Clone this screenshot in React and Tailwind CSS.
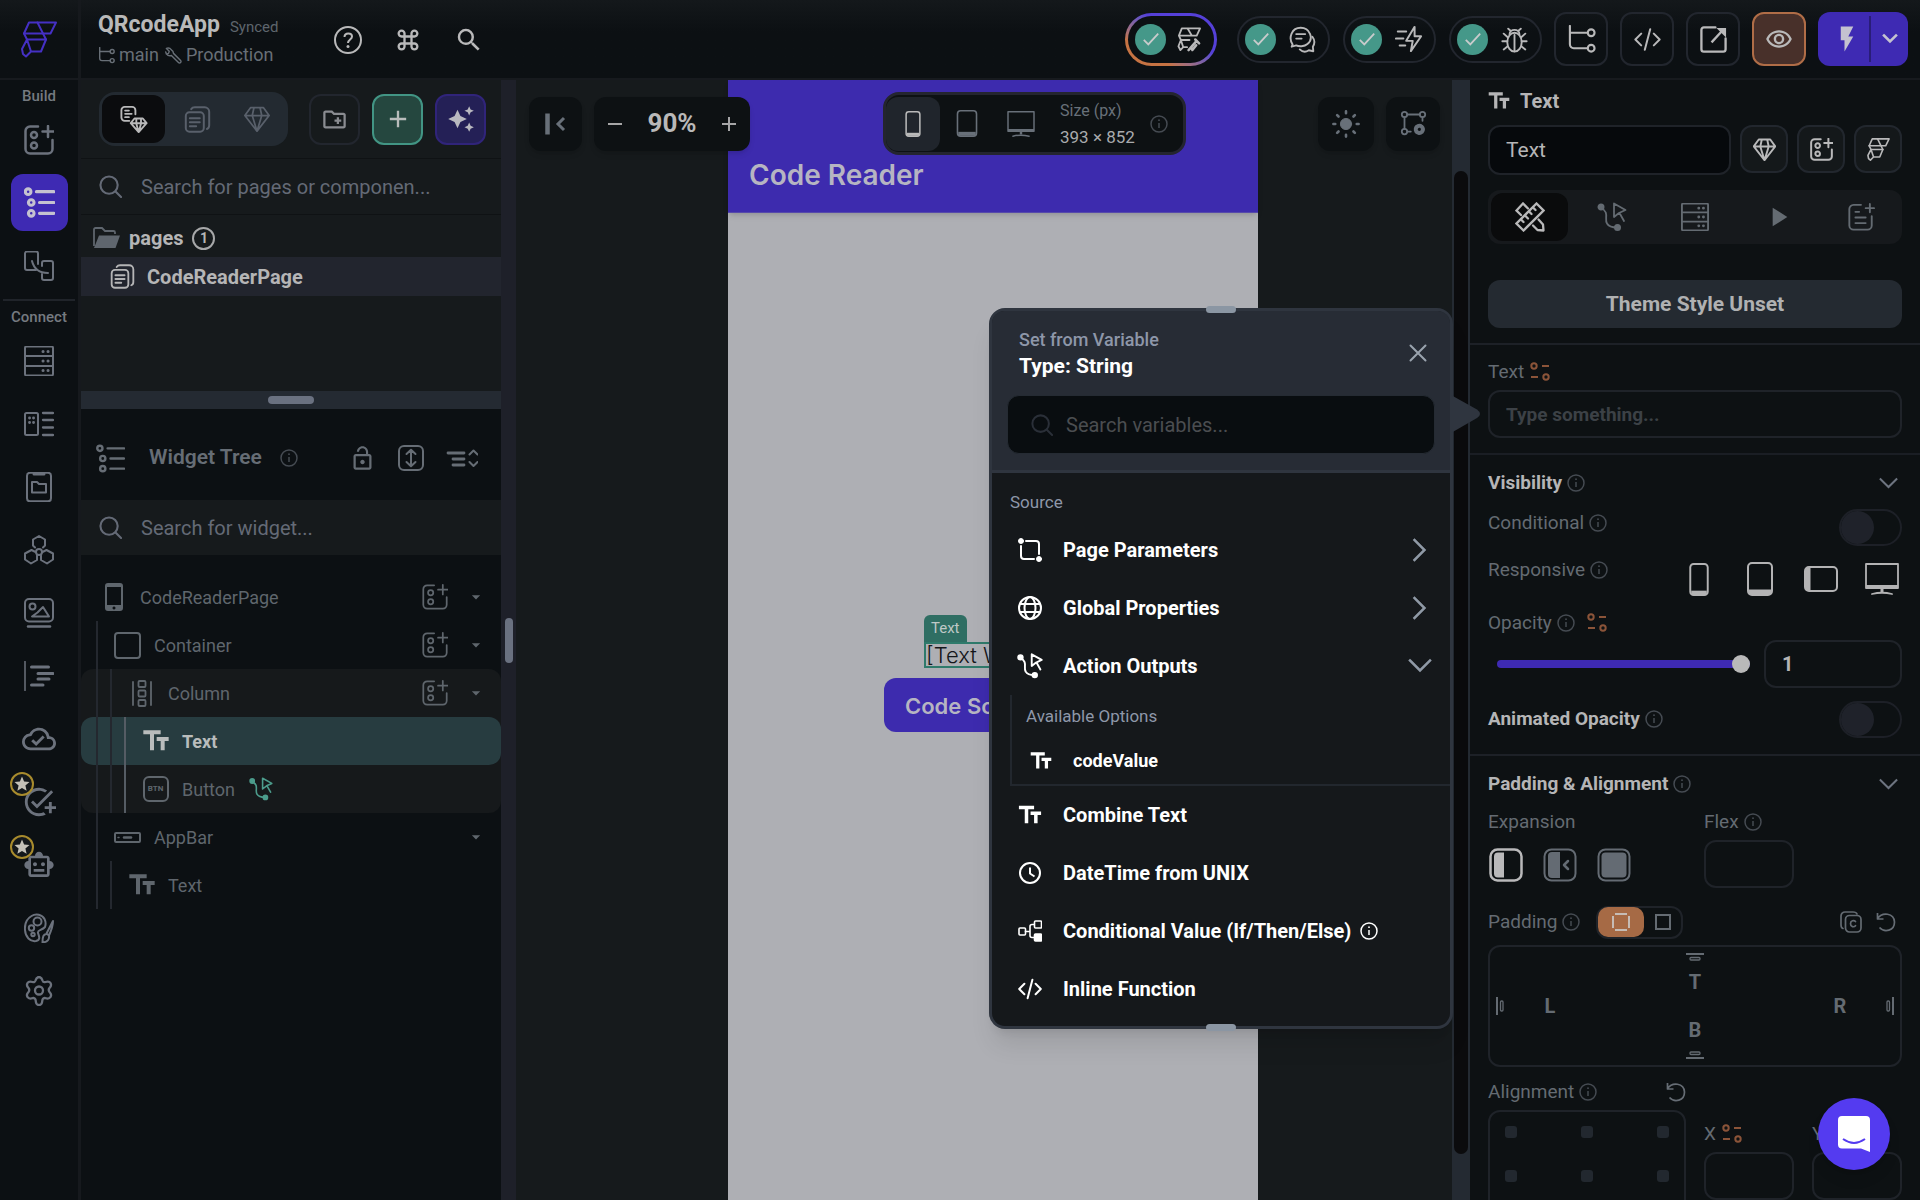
import React, { useState } from 'react';
import {
  MdAdd,
  MdAddTask,
  MdArrowDropDown,
  MdAutoAwesome,
  MdFlashOn,
  MdKeyboardCommandKey,
  MdLockOpen,
  MdOutlineCloudDone,
  MdOutlineCreateNewFolder,
  MdOutlineRemoveRedEye,
  MdOutlineSmartToy,
  MdPlayArrow,
  MdRemove,
  MdSearch,
  MdStar,
  MdTextFields,
} from 'react-icons/md';

/* ---------- icons ---------- */

const Svg = ({ box = '0 0 30 30', w = 2, className = 'size-[30px]', children }) => (
  <svg
    viewBox={box}
    fill="none"
    stroke="currentColor"
    strokeWidth={w}
    strokeLinecap="round"
    strokeLinejoin="round"
    className={`shrink-0 ${className}`}
    aria-hidden="true"
  >
    {children}
  </svg>
);

const Logo = ({ className, w = 2 }) => (
  <Svg box="0 0 36 37" w={w} className={className}>
    <path d="M8 1.5H35L29.5 12.5H3Z" />
    <path d="M16.5 1.5L25 18.5H6L3 12.5" />
    <path d="M25 18.5L20 30.5H10L6 18.5L1 28L2 33L5 35.5L10 30.5" />
  </Svg>
);

const WidgetAdd = ({ className, w = 2.5 }) => (
  <Svg w={w} className={className}>
    <path d="M14 1.5H6A4.500 4.500 0 0 0 1.500 6v18A4.500 4.500 0 0 0 6 28.500h18a4.500 4.500 0 0 0 4.500-4.500V15" />
    <circle cx="10" cy="10" r="3" />
    <circle cx="10" cy="20.500" r="3" />
    <path d="M24 1v11M18.500 6.500h11" />
  </Svg>
);

const TreeIcon = ({ className, w = 3 }) => (
  <Svg w={w} className={className}>
    <circle cx="4" cy="4.500" r="2.700" />
    <circle cx="7" cy="15" r="2.700" />
    <circle cx="7" cy="25.500" r="2.700" />
    <path d="M12 4.500h17M15 15h14M15 25.500h14" />
  </Svg>
);

const Storyboard = () => (
  <Svg>
    <path d="M12 19H3a2 2 0 0 1-2-2V2.500a2 2 0 0 1 2-2h9a2 2 0 0 1 2 2V13" />
    <path d="M18 15V12a2 2 0 0 1 2-2h7a2 2 0 0 1 2 2v15a2 2 0 0 1-2 2h-7a2 2 0 0 1-2-2v-4" />
    <path d="M8 10c2 8 7 12 16 12" />
  </Svg>
);

const Database = ({ className, w = 2 }) => (
  <Svg w={w} className={className}>
    <rect x="1" y="0.500" width="28" height="29" rx="1.500" />
    <path d="M1 10h28M1 20h28" />
    <path d="M19 5.500h.1M24 5.500h.1M19 15h.1M24 15h.1M19 24.500h.1M24 24.500h.1" strokeWidth="3" />
  </Svg>
);

const DataTypes = () => (
  <Svg>
    <rect x="1" y="4" width="13" height="22" rx="1.500" />
    <path d="M5.500 9h.1M9.500 9h.1M5.500 13.500h.1M9.500 13.500h.1" strokeWidth="2.800" />
    <path d="M19 4h10M19 11h10M19 18.500h10M19 26h10" strokeWidth="2.300" />
  </Svg>
);

const AppState = () => (
  <Svg>
    <rect x="3" y="0.800" width="24" height="28.500" rx="3" />
    <path d="M10 2h10" strokeWidth="3" />
    <path d="M8 20.500V10h5l2 2h7v8.500z" />
  </Svg>
);

const ApiCalls = () => (
  <Svg>
    <circle cx="15" cy="17" r="3" />
    <path d="M11 12.500L9 10.500V4.500L15 1l6 3.500v6l-2 2" />
    <path d="M11.500 17L7.500 15L1 18.500v6L7 28.500l6-3.500v-4.500" />
    <path d="M18.500 17l4-2L29 18.500v6L23 28.500l-6-3.500v-4.500" />
  </Svg>
);

const Media = () => (
  <Svg>
    <rect x="1" y="1" width="28" height="22.500" rx="4" />
    <circle cx="8.500" cy="8.500" r="3" />
    <path d="M8 18.500h17L19 9l-5.500 5.500z" />
    <path d="M4 28.500h22" strokeWidth="2.500" />
  </Svg>
);

const CustomCode = () => (
  <Svg>
    <path d="M1 0.500v29" strokeWidth="1.500" />
    <path d="M7.500 6h17M14 12.500h15M14 18h11M7.500 24h11.500" strokeWidth="3" />
  </Svg>
);

const Palette = () => (
  <Svg>
    <path d="M21 14c1-3 1-5-.5-8C18 1.500 12 0 7.500 3 2.500 6 .5 11 1 17c.5 7 5 12 11 11 5-1 3-5 2-8-1-3 4-2.500 7-6z" />
    <circle cx="13.500" cy="8.500" r="4" />
    <circle cx="7.500" cy="15" r="2.700" />
    <circle cx="9" cy="21.500" r="1.700" />
    <path d="M29 8L22.500 20.500l2.500 2C27 18 29 13 29 8zM22.500 21c-3 .5-4 2-4 8.500 5-.5 7-3 6.500-7" />
  </Svg>
);

const Gear = () => (
  <Svg w="2.300">
    <path d="M15 1c2.500 0 3 1.500 3.500 3.500.5 1.500 1.500 2 3 1.500 2-.6 3.800-1 5 1 1.300 2.300.5 3.500-1 5-1 1.300-1 2.700 0 4 1.500 1.500 2.300 3 1 5-1.200 2-3 1.800-5 1.200-1.500-.5-2.500 0-3 1.500C18 27.500 17.500 29 15 29s-3-1.500-3.500-5.300c-.5-1.500-1.500-2-3-1.500-2 .6-3.800.8-5-1.200-1.300-2-.5-3.500 1-5 1-1.300 1-2.700 0-4-1.500-1.500-2.300-2.700-1-5 1.200-2 3-1.600 5-1 1.500.5 2.500 0 3-1.500C12 2.500 12.500 1 15 1z" />
    <circle cx="15" cy="14.500" r="4" />
  </Svg>
);

const Pages = ({ className, w = 2.2 }) => (
  <Svg w={w} className={className}>
    <rect x="2" y="7" width="20" height="21.500" rx="4" />
    <path d="M8 3.500C9 2 10 1.500 12 1.500h11a5 5 0 0 1 5 5v15c0 2-1 3.500-2.500 4" />
    <path d="M6.500 13.500h11M6.500 18h11M6.500 22.500h7" />
  </Svg>
);

const Gem = ({ className, w = 2 }) => (
  <Svg w={w} className={className}>
    <path d="M7.500 2h15L29 11 15 29 1 11zM1 11h28M11.500 2L9.500 11 15 29l5.500-18-2-9" />
  </Svg>
);

const PageGem = () => (
  <Svg w="2" className="size-7">
    <path d="M10 17H5a3.500 3.500 0 0 1-3.500-3.500v-8A3.500 3.500 0 0 1 5 2h8a3.500 3.500 0 0 1 3.500 3.500V10M5.500 6h4M5.500 9.500h7M5.500 13h4" />
    <path d="M15.500 14.500h9l4 5L20 29l-8.500-9.500zM11.500 19.500h17M17.500 14.500V20l2.500 9 2.500-9v-5.500" />
  </Svg>
);

const Folder = () => (
  <svg viewBox="0 0 27 22" className="h-[22px] w-[27px] shrink-0" aria-hidden="true">
    <path d="M1 19V2.500A1.500 1.500 0 0 1 2.500 1H9l3 3h8.500A1.500 1.500 0 0 1 22 5.500V7" fill="none" stroke="#5f666e" strokeWidth="1.800" />
    <path d="M6 8.500h21L22.500 21H1z" fill="#5f666e" />
  </svg>
);

const ActionFlow = ({ className, w = 1.8 }) => (
  <Svg w={w} className={className}>
    <circle cx="4" cy="5" r="2.600" fill="currentColor" />
    <circle cx="20.500" cy="25.500" r="2.600" fill="currentColor" />
    <path d="M4 6C13 10 7 17 10 21.500c2 3.500 6 4 10 4" />
    <path d="M17 1.500L28.500 8l-6.500 3-5 4zM22.500 11l4.500 8" />
  </Svg>
);

const Branch = ({ className, w = 2 }) => (
  <Svg w={w} className={className}>
    <path d="M3 1v19a4 4 0 0 0 4 4h14M3 8h18" />
    <circle cx="25" cy="8" r="3.500" />
    <circle cx="25" cy="24" r="3.500" />
  </Svg>
);

const Code = ({ className, w = 2.2 }) => (
  <Svg w={w} className={className}>
    <path d="M8 8.500L1.500 15 8 21.500M22 8.500L28.500 15 22 21.500M18 3.500L12 26.500" />
  </Svg>
);

const Info = ({ className = 'text-[#454b52]' }) => (
  <Svg box="0 0 18 18" w="1.500" className={`size-[18px] ${className}`}>
    <circle cx="9" cy="9" r="8" />
    <path d="M9 8v5" strokeLinecap="butt" />
    <path d="M9 5.200h.01" strokeWidth="1.800" />
  </Svg>
);

const Bind = () => (
  <Svg box="0 0 20 20" w="2" className="size-5 text-[#8b5439]">
    <circle cx="4" cy="4" r="2.700" />
    <circle cx="16" cy="15" r="2.700" />
    <path d="M12 4h7M1 15h7" strokeLinecap="butt" />
  </Svg>
);

const Chevron = ({ className }) => (
  <Svg box="0 0 24 24" w="2.500" className={className}>
    <path d="M2 6.500l10 10 10-10" strokeLinecap="square" strokeLinejoin="miter" />
  </Svg>
);

const Glass = ({ className }) => (
  <Svg box="0 0 24 24" w="2.200" className={className}>
    <circle cx="10.500" cy="10.500" r="9" />
    <path d="M17.500 17.500L23 23" />
  </Svg>
);

const Undo = () => (
  <Svg box="0 0 20 20" w="1.700" className="size-5 text-[#666d75]">
    <path d="M1.500 1v6h6M1.500 6.500C6 0 18 .5 18.500 10c0 9-10 11-15 5.500" strokeLinecap="butt" />
  </Svg>
);

const Phone = ({ className }) => (
  <Svg box="0 0 20 34" w="2" className={className}>
    <rect x="1" y="1" width="18" height="32" rx="3.500" />
    <path d="M2 30.500h16" strokeWidth="4" strokeLinecap="butt" />
  </Svg>
);

const Tablet = ({ className }) => (
  <Svg box="0 0 26 34" w="2" className={className}>
    <rect x="1" y="1" width="24" height="32" rx="4" />
    <path d="M2 30h22" strokeWidth="5" strokeLinecap="butt" />
  </Svg>
);

const Monitor = ({ className }) => (
  <Svg box="0 0 34 32" w="1.800" className={className}>
    <path d="M1 1h32v24H1z" />
    <path d="M1 23.500h32M17 25v4" strokeWidth="3" strokeLinecap="butt" />
    <path d="M7 31c6-1.500 14-1.500 20 0" />
  </Svg>
);

/* ---------- shared bits ---------- */

const Check = () => (
  <span className="flex size-[31px] items-center justify-center rounded-full bg-[#459889] text-[#c9cbcc]">
    <Svg box="0 0 20 20" w="2" className="size-[18px]">
      <path d="M2 11l5 5L18 4" strokeLinecap="butt" strokeLinejoin="miter" />
    </Svg>
  </span>
);

const StatusPill = ({ label, children }) => (
  <button
    type="button"
    aria-label={label}
    className="flex h-[47px] w-[93px] items-center gap-[13px] rounded-full border-2 border-[#22262e] pl-[6px] text-[#b9b9ba]"
  >
    <Check />
    {children}
  </button>
);

const SquareButton = ({ label, children }) => (
  <button
    type="button"
    aria-label={label}
    className="flex size-[54px] items-center justify-center rounded-xl border-2 border-[#22262e] text-[#b9b9ba]"
  >
    {children}
  </button>
);

const Toggle = ({ id }) => (
  <input
    id={id}
    type="checkbox"
    className="h-[37px] w-[63px] shrink-0 appearance-none rounded-full border-2 border-[#1d2027] before:block before:size-[33px] before:rounded-full before:bg-[#1f222a]"
  />
);

/* ---------- top bar ---------- */

const TopBar = () => (
  <header className="flex h-20 shrink-0 border-b-2 border-[#171a1e] bg-gradient-to-b from-[#14181b] to-[#0c1013] to-40%">
    <div className="flex w-[81px] shrink-0 items-center justify-center border-r-[3px] border-[#16191d] text-[#4530c4]">
      <Logo className="h-[37px] w-[36px]" />
    </div>
    <div className="flex flex-1 items-center pr-3 pl-[17px]">
      <div className="w-[236px] pt-[2px]">
        <div className="flex items-baseline gap-[10px]">
          <h1 className="text-[23px] leading-[30px] font-bold text-[#b9b9b9]">QRcodeApp</h1>
          <span className="text-[15px] text-[#5e656c]">Synced</span>
        </div>
        <div className="flex items-center gap-1 text-[18px] leading-[30px] text-[#686f77]">
          <Branch className="size-[17px]" w="2.500" />
          <span>main</span>
          <Svg box="0 0 24 24" w="2" className="ml-[2px] size-[17px]">
            <path d="M9 4a6 6 0 0 0-7-2l4 4-1 3-3 1-1-3a6 6 0 0 0 8 5l10 10a2 2 0 0 0 3-3L12 9a6 6 0 0 0-3-5z" />
          </Svg>
          <span>Production</span>
        </div>
      </div>
      <div className="flex items-center gap-8 pt-[2px] text-[#b9b9ba]">
        <button type="button" aria-label="Help">
          <Svg box="0 0 28 28" w="2" className="size-7">
            <circle cx="14" cy="14" r="13" />
            <path d="M10.500 11c0-5 7.500-4.500 7.500-.5 0 3-4 3-4 6.500" strokeLinecap="butt" />
            <path d="M14 20.500h.01" strokeWidth="3" />
          </Svg>
        </button>
        <button type="button" aria-label="Shortcuts">
          <MdKeyboardCommandKey className="size-7" />
        </button>
        <button type="button" aria-label="Search">
          <MdSearch className="size-[30px]" />
        </button>
      </div>

      <div className="ml-auto flex items-center">
        <button
          type="button"
          aria-label="AI status"
          className="mr-5 rounded-full bg-gradient-to-tr from-[#c67343] from-25% to-[#5540d8] to-60% p-[3px] text-[#b9b9ba]"
        >
          <span className="flex h-[47px] w-[86px] items-center gap-[11px] rounded-full bg-[#0c1013] pl-[7px]">
            <Check />
            <Svg box="0 0 26 26" w="1.900" className="size-[25px]">
              <path d="M5 1.500h19L20.500 9H2zM11 1.500L15.500 9M2 9l2 4.500h9M4 13.500L1.500 20l2 4L6.500 21 4 13.500M6.500 21h4" />
              <path d="M12 24l8-9M19 13l4 4M15 21l1 3 4-5" strokeWidth="2.600" />
            </Svg>
          </span>
        </button>
        <div className="flex items-center gap-[13px]">
          <StatusPill label="Comments">
            <Svg w="2.100" className="size-[27px]">
              <path d="M4 20.500C-1 13 3 2 13 2s15 12 7.500 18C17 23 11 23 8 21.500L3 23z" />
              <path d="M8 9h10M8 14h6M26 12c3 4 2.500 8 .5 11l.5 5-5-1c-3 2-7 2-10-1" />
            </Svg>
          </StatusPill>
          <StatusPill label="Performance">
            <Svg w="2.100" className="size-[28px]">
              <path d="M21 2L12 17h7l-2 11 11-16h-7z" />
              <path d="M3 7h9M1 14.500h8M5 22h6" />
            </Svg>
          </StatusPill>
          <StatusPill label="Issues">
            <Svg w="2.100" className="size-[27px]">
              <ellipse cx="15" cy="18" rx="8" ry="10.500" />
              <path d="M9.500 9.500c0-7 11-7 11 0M15 10v18M8 3l3 2.500M22 3l-3 2.500M1.500 17H7M23 17h5.500M3 8.500l4.500 4M27 8.500l-4.500 4M3 26l4.500-3.500M27 26l-4.500-3.500" />
            </Svg>
          </StatusPill>
        </div>
        <div className="ml-3 flex items-center gap-3">
          <SquareButton label="Branches">
            <Branch className="size-[29px]" w="2.200" />
          </SquareButton>
          <SquareButton label="View code">
            <Code className="size-[27px]" />
          </SquareButton>
          <SquareButton label="Open in new tab">
            <Svg w="2.400" className="size-[29px]">
              <path d="M17 2.500H5A2.500 2.500 0 0 0 2.500 5v20A2.500 2.500 0 0 0 5 27.500h20a2.500 2.500 0 0 0 2.500-2.500V14" />
              <path d="M13 18L24 6" strokeLinecap="butt" />
              <path d="M18 3h10v10z" fill="currentColor" stroke="none" />
            </Svg>
          </SquareButton>
          <button
            type="button"
            aria-label="Preview"
            className="flex size-[54px] items-center justify-center rounded-xl border-2 border-[#b06d47] bg-[#48302a] text-[#b9b9ba]"
          >
            <MdOutlineRemoveRedEye className="size-[28px]" />
          </button>
          <div className="flex h-[54px] w-[90px] items-center rounded-xl bg-[#3e2ab3] text-[#c4c2d0]">
            <button type="button" aria-label="Run" className="flex h-full flex-1 items-center justify-center pl-[6px]">
              <MdFlashOn className="size-[30px]" />
            </button>
            <span className="h-[46px] w-0.5 bg-[#291d78]" />
            <button type="button" aria-label="Run options" className="flex h-full w-[37px] items-center justify-center">
              <Svg box="0 0 16 16" w="2.600" className="size-4">
                <path d="M2 4.500l6 6 6-6" strokeLinecap="square" strokeLinejoin="miter" />
              </Svg>
            </button>
          </div>
        </div>
      </div>
    </div>
  </header>
);

/* ---------- left rail ---------- */

const buildItems = [
  { name: 'Widget Palette', icon: <WidgetAdd className="size-[30px]" /> },
  { name: 'Widget Tree', icon: <TreeIcon className="size-[31px]" />, active: true },
  { name: 'Storyboard', icon: <Storyboard /> },
];

const connectItems = [
  { name: 'Firestore', icon: <Database className="size-[30px]" /> },
  { name: 'Data Types', icon: <DataTypes /> },
  { name: 'App Values', icon: <AppState /> },
  { name: 'API Calls', icon: <ApiCalls /> },
  { name: 'Media Assets', icon: <Media /> },
  { name: 'Custom Code', icon: <CustomCode /> },
  { name: 'Cloud Functions', icon: <MdOutlineCloudDone className="size-[34px]" /> },
  { name: 'Tests', icon: <MdAddTask className="size-[34px]" />, star: true },
  { name: 'Agents', icon: <MdOutlineSmartToy className="size-8" />, star: true },
  { name: 'Theme Settings', icon: <Palette /> },
  { name: 'Settings', icon: <Gear /> },
];

const RailItem = ({ item }) => (
  <div className="flex h-[63px] items-center justify-center">
    <button
      type="button"
      aria-label={item.name}
      className={`relative flex size-[57px] items-center justify-center rounded-xl ${
        item.active ? 'bg-[#3e2ab3] text-[#c4c2d0]' : 'text-[#6c727d]'
      }`}
    >
      {item.icon}
      {item.star && (
        <span className="absolute -top-px -left-px flex size-6 items-center justify-center rounded-full border-2 border-[#a88b2d] bg-[#14181b] text-[#c4c1b8]">
          <MdStar className="size-[18px]" />
        </span>
      )}
    </button>
  </div>
);

const Rail = () => (
  <nav className="w-[81px] shrink-0 border-r-[3px] border-[#16191d] text-[#757a80]">
    <p className="h-7 text-center text-[15px] leading-[32px] font-medium">Build</p>
    {buildItems.map((item) => (
      <RailItem key={item.name} item={item} />
    ))}
    <hr className="mx-[3px] mt-[2px] border-t-2 border-[#20242a]" />
    <p className="h-7 text-center text-[15px] leading-[32px] font-medium">Connect</p>
    {connectItems.map((item) => (
      <RailItem key={item.name} item={item} />
    ))}
  </nav>
);

/* ---------- pages + widget tree ---------- */

const TreeRow = ({ depth, icon, name, add, caret, active, extra }) => (
  <div
    className={`flex h-12 items-center pr-[15px] pl-[15px] text-[18px] ${
      active ? 'rounded-xl bg-[#273c40] font-bold text-[#b9bcbc]' : 'text-[#5f666d]'
    }`}
  >
    {Array.from({ length: depth }, (_, i) => (
      <span key={i} className={`h-12 w-[14px] border-l-2 ${i === 2 ? 'border-[#555c64]' : 'border-[#24282f]'}`} />
    ))}
    <span className="ml-[2px] flex w-[31px] justify-center">{icon}</span>
    <span className="ml-[11px]">{name}</span>
    {extra}
    <span className="ml-auto flex items-center gap-[18px]">
      {add && (
        <button type="button" aria-label={`Add to ${name}`}>
          <WidgetAdd className="size-[26px]" w="2" />
        </button>
      )}
      {caret && (
        <button type="button" aria-label={`Collapse ${name}`}>
          <MdArrowDropDown className="size-5" />
        </button>
      )}
    </span>
  </div>
);

const SearchRow = ({ label, placeholder, className }) => (
  <label className={`flex items-center gap-[19px] bg-[#161a1c] pl-[18px] ${className}`}>
    <Glass className="size-[23px] text-[#646a76]" />
    <input
      type="text"
      aria-label={label}
      placeholder={placeholder}
      className="flex-1 bg-transparent text-[20px] outline-none placeholder:text-[#646a76]"
    />
  </label>
);

const LeftPanel = () => (
  <aside className="flex w-[420px] shrink-0 flex-col">
    <div className="flex h-[79px] items-center border-b border-[#0f1214] bg-[#161a1c] pl-[18px]">
      <div className="flex h-[54px] w-[189px] shrink-0 items-center rounded-2xl bg-[#232a31] p-[3px] text-[#59606b]">
        <button
          type="button"
          aria-label="All"
          className="flex h-12 w-[63px] shrink-0 items-center justify-center rounded-xl bg-[#0b0c0e] text-[#b9b9ba]"
        >
          <PageGem />
        </button>
        <button type="button" aria-label="Pages" className="flex flex-1 justify-center pl-1">
          <Pages className="size-[27px]" />
        </button>
        <button type="button" aria-label="Components" className="flex flex-1 justify-center pl-1">
          <Gem className="size-[26px]" />
        </button>
      </div>
      <div className="ml-[21px] flex gap-3">
        <button type="button" aria-label="New folder" className="flex size-[51px] items-center justify-center rounded-xl border-2 border-[#22262e] text-[#8a8c91]">
          <MdOutlineCreateNewFolder className="size-[27px]" />
        </button>
        <button type="button" aria-label="Add page" className="flex size-[51px] items-center justify-center rounded-xl border-2 border-[#429584] bg-[#25473f] text-[#b9bcbb]">
          <MdAdd className="size-7" />
        </button>
        <button type="button" aria-label="Generate" className="flex size-[51px] items-center justify-center rounded-xl border-2 border-[#30247a] bg-[#242056] text-[#b9b9c0]">
          <MdAutoAwesome className="size-7" />
        </button>
      </div>
    </div>

    <SearchRow label="Search pages" placeholder="Search for pages or componen..." className="h-14 border-b border-[#0f1214]" />

    <div className="h-[176px] bg-[#161a1c]">
      <div className="flex h-[42px] items-center gap-[9px] pt-1 pl-3 text-[20px] font-bold text-[#b5b5b6]">
        <Folder />
        <span>pages</span>
        <span className="flex size-[23px] items-center justify-center rounded-full border-2 border-[#a7a8a9] text-[14px]">1</span>
      </div>
      <div className="flex h-[39px] items-center gap-3 bg-[#22252e] pl-[29px] text-[20px] font-bold text-[#b5b5b6]">
        <Pages className="size-[25px]" />
        <span>CodeReaderPage</span>
      </div>
    </div>

    <div className="flex h-[18px] items-center justify-center bg-[#242a32]">
      <span className="h-2 w-[46px] rounded-full bg-[#6a7180]" />
    </div>

    <div className="flex h-[91px] items-center px-[15px] pt-[7px] text-[#666d75]">
      <TreeIcon className="size-[29px]" w="2.500" />
      <h2 className="ml-6 text-[21px] font-semibold">Widget Tree</h2>
      <Info className="ml-[18px] text-[#454b52]" />
      <div className="ml-auto flex items-center gap-[22px] pr-2">
        <button type="button" aria-label="Unlock">
          <MdLockOpen className="size-[27px]" />
        </button>
        <button type="button" aria-label="Expand all">
          <Svg box="0 0 26 26" w="2" className="size-[26px]">
            <rect x="1" y="1" width="24" height="24" rx="5" />
            <path d="M13 5v16M8.500 9L13 4.800 17.500 9M8.500 17l4.500 4.200 4.500-4.200" />
          </Svg>
        </button>
        <button type="button" aria-label="Collapse all">
          <Svg box="0 0 32 22" w="2.800" className="h-[22px] w-8">
            <path d="M2 6h16M7 12h11M7 18h11" />
            <path d="M23.500 7.500L27.500 3.500l4 4M23.500 15l4 4 4-4" strokeWidth="2" />
          </Svg>
        </button>
      </div>
    </div>

    <SearchRow label="Search widgets" placeholder="Search for widget..." className="h-[55px]" />

    <div className="pt-[18px]">
      <TreeRow
        depth={0}
        name="CodeReaderPage"
        add
        caret
        icon={
          <svg viewBox="0 0 18 28" className="h-7 w-[18px]" fill="currentColor" aria-hidden="true">
            <path fillRule="evenodd" d="M3 0h12a3 3 0 0 1 3 3v22a3 3 0 0 1-3 3H3a3 3 0 0 1-3-3V3a3 3 0 0 1 3-3zM2 4v18h14V4zM9 23.500a1.500 1.500 0 1 0 .01 0z" />
          </svg>
        }
      />
      <TreeRow depth={1} name="Container" add caret icon={<span className="size-[27px] rounded-sm border-2 border-current" />} />
      <div className="rounded-xl bg-[#16191b]">
        <TreeRow
          depth={2}
          name="Column"
          add
          caret
          icon={
            <Svg box="0 0 20 27" w="1.800" className="h-[27px] w-5">
              <path d="M1 2v23M19 2v23" />
              <rect x="6.500" y="1" width="7" height="6" rx="1" />
              <rect x="6.500" y="10.500" width="7" height="6" rx="1" />
              <rect x="6.500" y="20" width="7" height="6" rx="1" />
            </Svg>
          }
        />
        <TreeRow depth={3} name="Text" active icon={<MdTextFields className="size-8 shrink-0" />} />
        <TreeRow
          depth={3}
          name="Button"
          icon={
            <span className="flex size-[26px] items-center justify-center rounded-md border-2 border-current text-[8px] font-bold">
              BTN
            </span>
          }
          extra={<ActionFlow className="ml-[14px] size-6 text-[#4c9c8c]" w="2" />}
        />
      </div>
      <TreeRow
        depth={1}
        name="AppBar"
        caret
        icon={
          <Svg box="0 0 27 11" w="2" className="h-[11px] w-[27px]">
            <rect x="1" y="1" width="25" height="9" rx="1" />
            <path d="M10 5.500h7" strokeWidth="2.500" />
            <path d="M4 5.500h1" strokeWidth="1.500" />
          </Svg>
        }
      />
      <TreeRow depth={2} name="Text" icon={<MdTextFields className="size-8 shrink-0" />} />
    </div>
  </aside>
);

/* ---------- canvas ---------- */

const floating = 'flex h-[54px] shrink-0 items-center justify-center rounded-xl bg-[#0d1113] text-[#687079] shadow-md';

const Canvas = () => (
  <main className="relative flex flex-1 justify-center overflow-hidden bg-[#161a1c] pl-[18px]">
    <div className="flex w-[530px] shrink-0 flex-col bg-[#aeafb4]">
      <div className="h-[133px] border-b border-[#5649ab] bg-[#3d2bae] pt-[78px] pl-[21px] shadow-md">
        <p className="font-['Inter',sans-serif] text-[28px] leading-[34px] font-semibold text-[#b6b5c2]">Code Reader</p>
      </div>
      <div className="flex flex-col items-center pt-[429px]">
        <div className="relative h-[26px] w-[138px] border-2 border-[#2f7a6b]">
          <span className="absolute bottom-6 -left-0.5 flex h-[27px] items-center rounded-t-md bg-[#2f6e63] px-[7px] text-[15px] text-[#bfc8c6]">
            Text
          </span>
          <p className="font-['Inter',sans-serif] text-[22px] leading-[22px] font-light whitespace-nowrap text-[#14161a]">[Text Widget]</p>
        </div>
        <button
          type="button"
          className="mt-[10px] h-[54px] w-[218px] rounded-xl bg-[#3d2bae] pt-[2px] pl-[21px] text-left font-['Inter',sans-serif] text-[22px] font-semibold text-[#b6b5c2]"
        >
          Code Scan
        </button>
      </div>
    </div>

    <div className="absolute inset-x-3 top-[12px] flex h-[63px] items-center">
      <button type="button" aria-label="Collapse panel" className={`${floating} ml-px w-[53px]`}>
        <Svg box="0 0 22 24" w="3" className="h-6 w-[22px]">
          <path d="M2.500 1.500v21" strokeWidth="4.500" strokeLinecap="butt" />
          <path d="M19 6l-6 6 6 6" strokeLinecap="butt" strokeLinejoin="miter" />
        </Svg>
      </button>
      <div className={`${floating} ml-3 w-[156px] gap-5`}>
        <button type="button" aria-label="Zoom out">
          <MdRemove className="size-6 text-[#a6a6a7]" />
        </button>
        <span className="text-[26px] font-bold text-[#b9b9b9]">90%</span>
        <button type="button" aria-label="Zoom in">
          <MdAdd className="size-6 text-[#a6a6a7]" />
        </button>
      </div>
      <div className="ml-[133px] flex h-[63px] w-[303px] items-center rounded-2xl border-[3px] border-[#24252f] bg-[#0d1113] text-[#687079]">
        <button type="button" aria-label="Phone" className="flex h-[54px] w-[54px] items-center justify-center rounded-xl bg-[#20252c] text-[#b9b9b9]">
          <Phone className="h-[26px] w-4" />
        </button>
        <button type="button" aria-label="Tablet" className="flex w-[54px] justify-center">
          <Tablet className="h-[27px] w-[22px]" />
        </button>
        <button type="button" aria-label="Desktop" className="flex w-[54px] justify-center">
          <Monitor className="h-[26px] w-[28px]" />
        </button>
        <div className="ml-3 w-[90px] text-[16px] leading-[26px]">
          <p>Size (px)</p>
          <p className="text-[17px] text-[#a9abad]">393 × 852</p>
        </div>
        <Info className="text-[#454b52]" />
      </div>
      <div className="ml-auto flex gap-3">
        <button type="button" aria-label="Light mode" className={`${floating} w-[56px]`}>
          <Svg w="2.800" className="size-7">
            <circle cx="15" cy="15" r="6" fill="currentColor" strokeWidth="1" />
            <path d="M15 1.500v2M15 26.500v2M1.500 15h2M26.500 15h2M5.500 5.500L7 7M23 23l1.500 1.500M24.500 5.500L23 7M7 23l-1.500 1.500" />
          </Svg>
        </button>
        <button type="button" aria-label="Canvas settings" className={`${floating} w-[54px]`}>
          <Svg w="2" className="size-[27px]">
            <circle cx="5" cy="5" r="3" />
            <circle cx="25" cy="5" r="3" />
            <circle cx="5" cy="24" r="3" />
            <path d="M8 5h14M5 8v13M25 8v4M8 24h4" />
            <circle cx="21.500" cy="21.500" r="4" strokeWidth="4.500" strokeDasharray="3 1.200" />
          </Svg>
        </button>
      </div>
    </div>
  </main>
);

/* ---------- properties panel ---------- */

const Label = ({ htmlFor, strong, children, info = true }) => (
  <span className="flex items-center gap-[5px]">
    <label
      htmlFor={htmlFor}
      className={strong ? 'text-[19px] font-bold text-[#b5b5b6]' : 'text-[19px] text-[#646b72]'}
    >
      {children}
    </label>
    {info && <Info />}
  </span>
);

const field = 'rounded-xl border-2 border-[#1f2329] bg-transparent outline-none';
const padField = 'w-[80px] bg-transparent text-center text-[20px] font-bold outline-none placeholder:text-[#646b72]';
const tool = 'flex size-12 shrink-0 items-center justify-center rounded-xl border-2 border-[#22272e] bg-[#14181a] text-[#b9b9ba]';

const tabs = [
  {
    name: 'Properties',
    icon: (
      <Svg w="2.300">
        <path d="M8.500 28.500L1.500 21.500l20-20 7 7z" strokeLinejoin="miter" />
        <path d="M6 17.500l2.500 2.500M10 13.500l3 3M14 9.500l2.500 2.500M18 5.500l2.500 2.500" />
        <path d="M6 13L1.500 8.500l6.500-7 5 5" strokeLinejoin="miter" />
        <path d="M18 23.500l4.500 4.500 6 .5-.5-6-4.500-5" />
      </Svg>
    ),
  },
  { name: 'Actions', icon: <ActionFlow className="size-[30px]" /> },
  { name: 'Backend', icon: <Database className="size-[28px]" /> },
  { name: 'Animations', icon: <MdPlayArrow className="size-8" /> },
  {
    name: 'Docs',
    icon: (
      <Svg w="2" className="size-[28px]">
        <path d="M15 2H7a4.500 4.500 0 0 0-4.500 4.500V24A4.500 4.500 0 0 0 7 28.500h15a4.500 4.500 0 0 0 4.500-4.500V14M9 9.500h4M9 15.500h11M9 21.500h11M24.500 1v9M20 5.500h9" />
      </Svg>
    ),
  },
];

const PadBar = ({ className }) => (
  <Svg box="0 0 18 8" w="2" className={`h-2 w-[18px] ${className || ''}`}>
    <path d="M0 1h18" strokeLinecap="butt" />
    <rect x="4" y="4.500" width="10" height="2.500" rx="1" strokeWidth="1.300" />
  </Svg>
);

const Properties = () => {
  const [tab, setTab] = useState('Properties');

  return (
    <aside className="w-[450px] shrink-0 overflow-hidden bg-[#0d1113] text-[#646b72]">
      <div className="px-[18px]">
        <div className="flex h-[45px] items-center gap-2 pb-1 text-[20px] font-bold text-[#b5b5b6]">
          <MdTextFields className="-ml-0.5 size-[26px]" />
          <h2>Text</h2>
        </div>
        <div className="flex gap-[9px]">
          <input
            type="text"
            aria-label="Widget name"
            defaultValue="Text"
            className="h-[50px] min-w-0 flex-1 rounded-xl border-2 border-[#1f2329] bg-[#06090c] px-4 text-[21px] text-[#b5b5b6] outline-none"
          />
          <button type="button" aria-label="Convert to component" className={tool}>
            <Gem className="size-[23px]" w="2.500" />
          </button>
          <button type="button" aria-label="Wrap widget" className={tool}>
            <WidgetAdd className="size-[23px]" w="2.600" />
          </button>
          <button type="button" aria-label="Save as theme" className={tool}>
            <Logo className="size-[23px]" w="2.600" />
          </button>
        </div>

        <div className="mt-[15px] flex h-[54px] items-center justify-between rounded-xl bg-[#16191c] p-[3px]">
          {tabs.map((t) => (
            <button
              key={t.name}
              type="button"
              aria-label={t.name}
              onClick={() => setTab(t.name)}
              className={`flex h-12 w-[77px] items-center justify-center rounded-xl ${
                tab === t.name ? 'bg-[#0a0b0c] text-[#b9b9ba]' : 'text-[#646b72]'
              }`}
            >
              {t.icon}
            </button>
          ))}
        </div>

        <button type="button" className="mt-9 h-12 w-full rounded-xl bg-[#242a31] pt-[2px] text-[21px] font-bold text-[#b0b1b2]">
          Theme Style Unset
        </button>
      </div>

      <section className="mt-[15px] h-[110px] border-t-2 border-[#1d2127] px-[18px] pt-[11px]">
        <div className="flex h-8 items-center gap-[6px]">
          <Label htmlFor="text-value" info={false}>
            Text
          </Label>
          <Bind />
        </div>
        <input
          id="text-value"
          type="text"
          placeholder="Type something..."
          className={`${field} mt-[2px] h-12 w-full px-4 text-[19px] font-bold placeholder:text-[#3c4146]`}
        />
      </section>

      <section className="h-[301px] border-t-2 border-[#1a1e24] px-[18px] pt-[7px]">
        <div className="flex h-[42px] items-center justify-between pr-1">
          <Label strong>Visibility</Label>
          <Chevron className="size-[19px] text-[#6d7480]" />
        </div>
        <div className="flex h-12 items-start justify-between pt-[5px]">
          <Label htmlFor="conditional">Conditional</Label>
          <Toggle id="conditional" />
        </div>
        <div className="flex h-[54px] items-start justify-between pr-[3px]">
          <span className="pt-1">
            <Label>Responsive</Label>
          </span>
          <div className="flex h-[54px] items-center gap-[27px] text-[#b3b3b4]">
            <span className="flex w-[34px] justify-center">
              <Phone className="h-[33px] w-5" />
            </span>
            <span className="flex w-[34px] justify-center">
              <Tablet className="h-[34px] w-[26px]" />
            </span>
            <Svg box="0 0 34 26" w="2" className="h-[26px] w-[34px]">
              <rect x="1" y="1" width="32" height="24" rx="4" />
              <path d="M4 2v22" strokeWidth="5" strokeLinecap="butt" />
            </Svg>
            <Monitor className="h-8 w-[34px]" />
          </div>
        </div>
        <div className="flex h-[34px] items-center gap-3">
          <Label htmlFor="opacity">Opacity</Label>
          <Bind />
        </div>
        <div className="flex h-12 items-center gap-[14px] pl-[9px]">
          <input
            id="opacity"
            type="range"
            min="0"
            max="1"
            step="0.01"
            defaultValue="1"
            className="h-2 min-w-0 flex-1 appearance-none rounded-full bg-[#3e2ab3] [&::-webkit-slider-thumb]:size-[18px] [&::-webkit-slider-thumb]:appearance-none [&::-webkit-slider-thumb]:rounded-full [&::-webkit-slider-thumb]:bg-[#b9b9b9]"
          />
          <input
            type="text"
            aria-label="Opacity value"
            defaultValue="1"
            className={`${field} h-12 w-[138px] px-4 text-[20px] font-bold text-[#b5b5b6]`}
          />
        </div>
        <div className="flex h-[62px] items-center justify-between">
          <Label htmlFor="animated-opacity" strong>
            Animated Opacity
          </Label>
          <Toggle id="animated-opacity" />
        </div>
      </section>

      <section className="border-t-2 border-[#1d2127] px-[18px] pt-[8px]">
        <div className="flex h-10 items-center justify-between pr-1">
          <Label strong>Padding &amp; Alignment</Label>
          <Chevron className="size-[19px] text-[#6d7480]" />
        </div>
        <div className="flex">
          <div className="w-[216px]">
            <div className="flex h-9 items-center">
              <Label info={false}>Expansion</Label>
            </div>
            <div className="flex h-12 items-center gap-5 pt-[2px] pl-px text-[#646b73]">
              <button type="button" aria-label="Not expanded" className="text-[#b9b9ba]">
                <Svg box="0 0 34 34" w="2.500" className="size-[34px]">
                  <rect x="1.500" y="1.500" width="31" height="31" rx="7" />
                  <path d="M15 4.500v25H9a4 4 0 0 1-4-4v-17a4 4 0 0 1 4-4z" fill="currentColor" stroke="none" />
                </Svg>
              </button>
              <button type="button" aria-label="Flexible">
                <Svg box="0 0 34 34" w="2" className="size-[34px]">
                  <rect x="1.500" y="1.500" width="31" height="31" rx="7" />
                  <path d="M17 4v26H9a4 4 0 0 1-4-4V8a4 4 0 0 1 4-4z" fill="currentColor" stroke="none" />
                  <path d="M25 13l-4 4 4 4" strokeWidth="2.500" />
                </Svg>
              </button>
              <button type="button" aria-label="Expanded">
                <Svg box="0 0 34 34" w="2" className="size-[34px]">
                  <rect x="1.500" y="1.500" width="31" height="31" rx="7" />
                  <rect x="4.500" y="4.500" width="25" height="25" rx="4" fill="currentColor" stroke="none" />
                </Svg>
              </button>
            </div>
          </div>
          <div>
            <div className="flex h-9 items-center">
              <Label htmlFor="flex">Flex</Label>
            </div>
            <input id="flex" type="text" className={`${field} h-12 w-[90px] px-4`} />
          </div>
        </div>

        <div className="mt-4 flex h-9 items-center">
          <Label>Padding</Label>
          <div className="ml-4 flex h-[33px] w-[87px] items-center rounded-xl border-2 border-[#1f2329]">
            <button type="button" aria-label="Each side" className="flex h-[30px] w-[46px] items-center justify-center rounded-[10px] bg-[#a66a45] text-[#c6bcb5]">
              <Svg box="0 0 18 18" w="2" className="size-[18px]">
                <path d="M3 1h12M3 17h12M1 3v12M17 3v12" strokeLinecap="butt" />
              </Svg>
            </button>
            <button type="button" aria-label="All sides" className="flex flex-1 justify-center">
              <span className="size-4 border-2 border-[#646b72]" />
            </button>
          </div>
          <div className="ml-auto flex gap-[14px] pr-[6px]">
            <button type="button" aria-label="Copy padding">
              <Svg box="0 0 22 22" w="1.700" className="size-[22px]">
                <rect x="5.500" y="4.500" width="15.500" height="16.500" rx="4" />
                <path d="M3 17.500C1.500 17 1 15.500 1 14V5a4 4 0 0 1 4-4h8c2 0 3.500.5 4 2M15.500 10.500c-1.500-1.700-5-1-5 2.200s3.500 3.800 5 2" />
              </Svg>
            </button>
            <button type="button" aria-label="Reset padding">
              <Undo />
            </button>
          </div>
        </div>

        <div className="mt-[5px] flex h-[122px] items-center justify-between rounded-xl border-2 border-[#1f2329] px-[6px]">
          <div className="flex items-center">
            <Svg box="0 0 8 18" w="2" className="h-[18px] w-2">
              <path d="M1 0v18" strokeLinecap="butt" />
              <rect x="4.500" y="4" width="2.500" height="10" rx="1" strokeWidth="1.300" />
            </Svg>
            <input type="text" aria-label="Left padding" placeholder="L" className={`${padField} ml-[6px]`} />
          </div>
          <div className="flex h-full flex-col items-center justify-between py-[6px]">
            <PadBar />
            <div className="flex flex-col gap-[10px]">
              <input type="text" aria-label="Top padding" placeholder="T" className={`${padField} h-[38px]`} />
              <input type="text" aria-label="Bottom padding" placeholder="B" className={`${padField} h-[38px]`} />
            </div>
            <PadBar className="-scale-y-100" />
          </div>
          <div className="flex items-center">
            <input type="text" aria-label="Right padding" placeholder="R" className={`${padField} mr-[6px]`} />
            <Svg box="0 0 8 18" w="2" className="h-[18px] w-2 -scale-x-100">
              <path d="M1 0v18" strokeLinecap="butt" />
              <rect x="4.500" y="4" width="2.500" height="10" rx="1" strokeWidth="1.300" />
            </Svg>
          </div>
        </div>

        <div className="flex gap-[18px]">
          <div className="w-[198px]">
            <div className="mt-[7px] flex h-9 items-center justify-between">
              <Label>Alignment</Label>
              <button type="button" aria-label="Reset alignment">
                <Undo />
              </button>
            </div>
            <div className="grid h-[126px] grid-cols-3 content-start gap-y-8 rounded-xl border-2 border-[#1f2329] px-[15px] pt-[14px]">
              {[0, 1, 2, 3, 4, 5, 6, 7, 8].map((n) => (
                <button
                  key={n}
                  type="button"
                  aria-label={`Align ${n + 1}`}
                  className="size-3 rounded-[3px] bg-[#22282f] nth-[3n]:justify-self-end nth-[3n+2]:justify-self-center"
                />
              ))}
            </div>
          </div>
          <div className="flex flex-1 gap-[18px] pt-[49px]">
            <div className="flex-1">
              <div className="flex h-9 items-center gap-[6px]">
                <Label htmlFor="align-x" info={false}>
                  X
                </Label>
                <Bind />
              </div>
              <input id="align-x" type="text" className={`${field} h-12 w-full px-4`} />
            </div>
            <div className="flex-1">
              <div className="flex h-9 items-center gap-[6px]">
                <Label htmlFor="align-y" info={false}>
                  Y
                </Label>
                <Bind />
              </div>
              <input id="align-y" type="text" className={`${field} h-12 w-full px-4`} />
            </div>
          </div>
        </div>
      </section>
    </aside>
  );
};

/* ---------- variable popover ---------- */

const SourceRow = ({ icon, name, open, nested, info }) => (
  <button type="button" className="flex h-[58px] w-full items-center pr-[18px] pl-[26px] text-left text-white">
    <span className="flex w-6 justify-center">{icon}</span>
    <span className="ml-[21px] text-[20px] font-bold">{name}</span>
    {info && <Info className="ml-[9px] text-white" />}
    {nested && <Chevron className={`ml-auto size-6 text-[#8f99a6] ${open ? '' : '-rotate-90'}`} />}
  </button>
);

const VariablePopover = () => (
  <div
    role="dialog"
    aria-label="Set from Variable"
    className="absolute top-[308px] right-[467px] w-[464px] rounded-2xl border-[3px] border-[#2f353f] bg-[#15181b] shadow-xl"
  >
    <span className="absolute -top-[5px] left-1/2 h-[7px] w-[30px] -translate-x-1/2 rounded-sm bg-[#8b96a3]" />
    <span className="absolute -bottom-[5px] left-1/2 h-[7px] w-[30px] -translate-x-1/2 rounded-sm bg-[#8b96a3]" />
    <svg viewBox="0 0 30 38" className="absolute top-[84px] left-full h-[38px] w-[30px]" aria-hidden="true">
      <path d="M1 0L27 14.500Q33 19 27 23L1 38Z" fill="#2f353f" />
    </svg>

    <div className="rounded-t-xl border-b-[3px] border-[#2f353f] bg-[#272c35] px-[15px] pt-[15px] pb-4">
      <div className="flex items-center justify-between pr-2 pl-3">
        <div>
          <p className="text-[18px] leading-[27px] font-medium text-[#8e97a9]">Set from Variable</p>
          <p className="text-[21px] leading-[27px] font-bold text-white">Type: String</p>
        </div>
        <button type="button" aria-label="Close" className="text-[#9aa3ae]">
          <Svg box="0 0 18 18" w="2" className="size-[18px]">
            <path d="M1.500 1.500l15 15M16.500 1.500l-15 15" />
          </Svg>
        </button>
      </div>
      <label className="mt-[15px] flex h-[59px] items-center gap-[13px] rounded-xl border border-[#252b33] bg-[#090d10] pl-[23px]">
        <Glass className="size-[22px] text-[#2a2f38]" />
        <input
          type="text"
          aria-label="Search variables"
          placeholder="Search variables..."
          className="flex-1 bg-transparent text-[20px] text-white outline-none placeholder:text-[#4b4d50]"
        />
      </label>
    </div>

    <p className="h-12 pt-[14px] pl-[18px] text-[17px] leading-[30px] text-[#8e97a9]">Source</p>
    <SourceRow
      name="Page Parameters"
      nested
      icon={
        <Svg box="0 0 24 24" w="2" className="size-6">
          <circle cx="3" cy="3" r="2.500" fill="currentColor" strokeWidth="1" />
          <circle cx="21" cy="21" r="2.500" fill="currentColor" strokeWidth="1" />
          <path d="M8 3h10a3 3 0 0 1 3 3v10M3 8v10a3 3 0 0 0 3 3h10" />
        </Svg>
      }
    />
    <SourceRow
      name="Global Properties"
      nested
      icon={
        <Svg box="0 0 24 24" w="2" className="size-6">
          <circle cx="12" cy="12" r="11" />
          <ellipse cx="12" cy="12" rx="5.500" ry="11" />
          <path d="M2 8h20M2 16h20" />
        </Svg>
      }
    />
    <SourceRow name="Action Outputs" nested open icon={<ActionFlow className="size-[26px]" w="2.200" />} />
    <div className="ml-[18px] h-[91px] border-b-2 border-l-2 border-[#22272e] pl-[14px]">
      <p className="h-[43px] text-[17px] leading-[43px] text-[#8e97a9]">Available Options</p>
      <button type="button" className="flex h-[45px] items-center gap-[19px] pl-[2px] text-[18px] font-bold text-white">
        <MdTextFields className="size-[26px]" />
        codeValue
      </button>
    </div>
    <SourceRow name="Combine Text" icon={<MdTextFields className="size-7 shrink-0" />} />
    <SourceRow
      name="DateTime from UNIX"
      icon={
        <Svg box="0 0 24 24" w="2" className="size-6">
          <circle cx="12" cy="12" r="10" />
          <path d="M12 6.500v6l4.500 3" strokeLinecap="butt" />
        </Svg>
      }
    />
    <SourceRow
      name="Conditional Value (If/Then/Else)"
      info
      icon={
        <Svg box="0 0 24 24" w="1.600" className="size-6">
          <rect x="1" y="9" width="6.500" height="7" rx="1" />
          <rect x="16.500" y="2" width="7" height="7" rx="1" />
          <rect x="16.500" y="15" width="7" height="7" rx="1" fill="currentColor" />
          <path d="M7.500 12.500h4.500M16 5.500h-2a2 2 0 0 0-2 2v9a2 2 0 0 0 2 2h2" />
        </Svg>
      }
    />
    <SourceRow name="Inline Function" icon={<Code className="size-6" w="2.500" />} />
    <div className="h-2" />
  </div>
);

const App = () => {
  return (
    <div className="relative flex h-screen flex-col overflow-hidden bg-[#0c1013] font-['Roboto',sans-serif]">
      <TopBar />
      <div className="flex min-h-0 flex-1">
        <Rail />
        <LeftPanel />
        <div className="flex w-[15px] shrink-0 items-center justify-center bg-[#1e2029]">
          <span className="h-[45px] w-2 rounded-full bg-[#6a7180]" />
        </div>
        <Canvas />
        <div className="w-[18px] shrink-0 border-x-2 border-[#242a32] bg-[#242a32] pt-[91px] pb-[46px]">
          <div className="h-full rounded-full bg-[#0b0b0d]" />
        </div>
        <Properties />
      </div>
      <VariablePopover />
      <button
        type="button"
        aria-label="Open chat"
        className="absolute right-[30px] bottom-[30px] flex size-[72px] items-center justify-center rounded-full bg-[#543bf0] shadow-lg"
      >
        <svg viewBox="0 0 32 36" className="h-9 w-8" aria-hidden="true">
          <path d="M4 0h24a4 4 0 0 1 4 4v32l-9-3.500H4a4 4 0 0 1-4-4V4a4 4 0 0 1 4-4z" fill="#fff" />
          <path d="M5 23c7 5 15 5 22 0" fill="none" stroke="#543bf0" strokeWidth="2" />
        </svg>
      </button>
    </div>
  );
};

export default App;
